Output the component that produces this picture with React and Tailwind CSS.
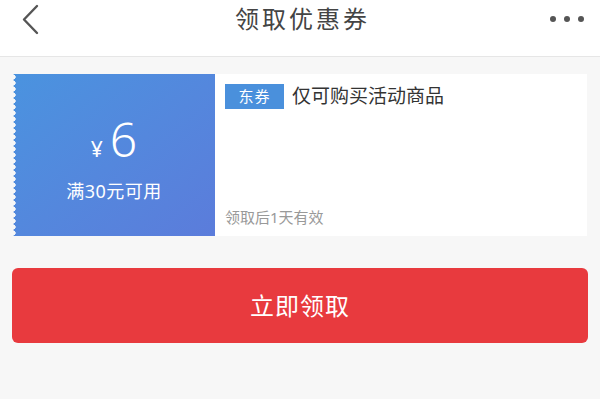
const FONT = "font-['Noto_Sans','Noto_Sans_CJK_SC',sans-serif]";

function Header() {
  return (
    <div className="h-[57px] bg-white border-b border-[#e6e6e6] px-[15px]">
      <div className="h-[37px] flex items-center justify-between">
        <svg width="24" height="32" viewBox="0 0 24 32">
          <polyline points="22,3 9,16.5 22,30" fill="none" stroke="#555" strokeWidth="2.4" strokeLinecap="round" strokeLinejoin="round" />
        </svg>
        <span className="text-[24px] tracking-[3px] text-[#444] leading-none ml-[16px]">领取优惠券</span>
        <div className="flex gap-[8px] items-center mr-[1px]">
          <span className="w-[6px] h-[6px] rounded-full bg-[#555]" />
          <span className="w-[6px] h-[6px] rounded-full bg-[#555]" />
          <span className="w-[6px] h-[6px] rounded-full bg-[#555]" />
        </div>
      </div>
    </div>
  );
}

function Coupon() {
  return (
    <div className="mx-[13px] mt-[17px] h-[162px] flex">
      <div className="relative w-[202px] bg-linear-to-br from-[#4a93df] to-[#5b7cdb] flex flex-col items-center justify-center text-white pt-[8px]">
        <div className="absolute left-0 top-0 bottom-0 w-[3px] bg-[radial-gradient(circle_at_0_50%,#f7f7f7_2.4px,transparent_2.9px)] bg-[length:4px_6px]" />
        <div className="flex items-baseline">
          <span className="text-[21px] mr-[7px]">¥</span>
          <span className="text-[48px] leading-[52px] font-light">6</span>
        </div>
        <span className="text-[18px] mt-[12px] tracking-[0.5px]">满30元可用</span>
      </div>
      <div className="flex-1 bg-white flex flex-col justify-between pl-[10px] pt-[8px] pb-[8px]">
        <div className="flex items-center">
          <span className="bg-[#4a90dc] text-white text-[15px] leading-[25px] w-[59px] text-center tracking-[1px]">东券</span>
          <span className="ml-[8px] text-[19px] text-[#333]">仅可购买活动商品</span>
        </div>
        <span className="text-[15px] text-[#999]">领取后1天有效</span>
      </div>
    </div>
  );
}

export default function App() {
  return (
    <div className={`w-[600px] h-[399px] bg-[#f7f7f7] ${FONT}`}>
      <Header />
      <Coupon />
      <div className="mx-[12px] mt-[32px]">
        <button className="w-full h-[75px] rounded-[6px] bg-[#e83a3e] text-white text-[24px] tracking-[1px]">
          立即领取
        </button>
      </div>
    </div>
  );
}
